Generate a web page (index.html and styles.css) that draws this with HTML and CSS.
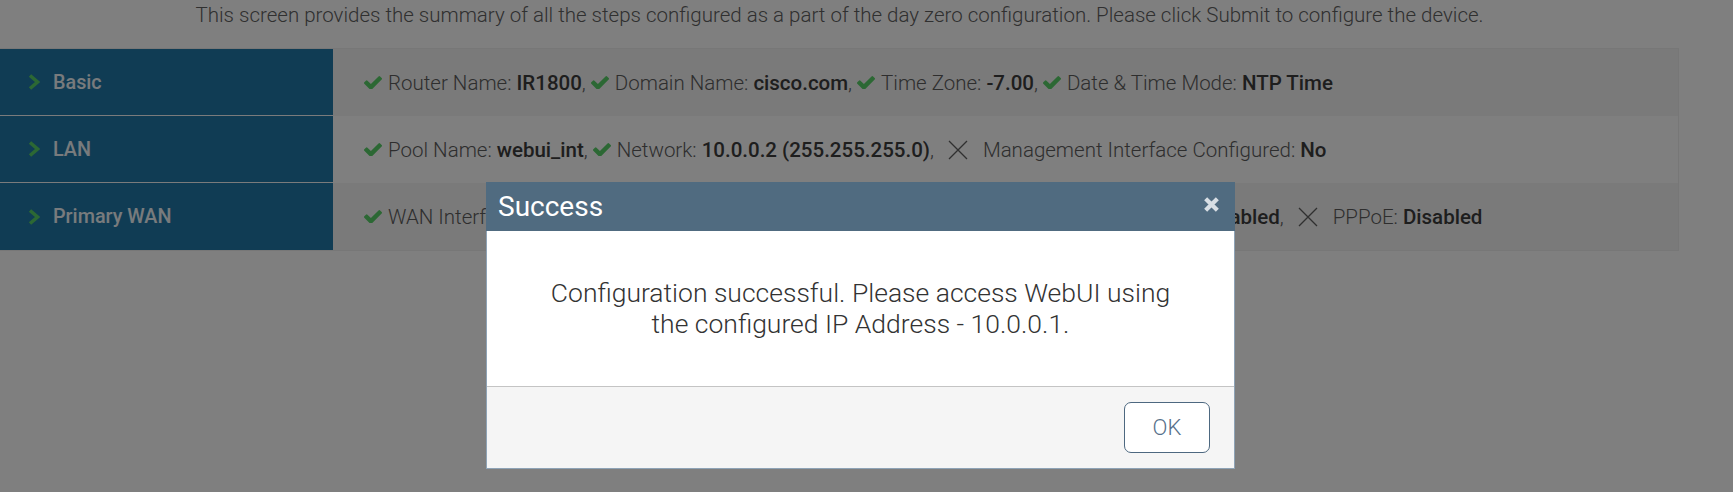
FILE: index.html
```html
<!DOCTYPE html>
<html lang="en">
<head>
  <meta charset="UTF-8" />
  <title>Day Zero Summary</title>
  <link rel="stylesheet" href="styles.css">
</head>
<body>

  <div class="page">
    <p class="intro">This screen provides the summary of all the steps configured as a part of the day zero configuration. Please click Submit to configure the device.</p>

    <div class="summary">
      <div class="row">
        <div class="row-head">
          <svg class="chevron" viewBox="0 0 12 16"><polyline points="2,1.5 9.5,8 2,14.5" /></svg>
          <span>Basic</span>
        </div>
        <div class="row-body">
          <svg class="ok" viewBox="121 338 1550 1090"><path d="M1671 566q0 40-28 68l-724 724-136 136q-28 28-68 28t-68-28l-136-136-362-362q-28-28-28-68t28-68l136-136q28-28 68-28t68 28l294 295 656-657q28-28 68-28t68 28l136 136q28 28 28 68z"/></svg>
          Router Name:&nbsp;<b>IR1800</b>,&nbsp;
          <svg class="ok" viewBox="121 338 1550 1090"><path d="M1671 566q0 40-28 68l-724 724-136 136q-28 28-68 28t-68-28l-136-136-362-362q-28-28-28-68t28-68l136-136q28-28 68-28t68 28l294 295 656-657q28-28 68-28t68 28l136 136q28 28 28 68z"/></svg>
          Domain Name:&nbsp;<b>cisco.com</b>,&nbsp;
          <svg class="ok" viewBox="121 338 1550 1090"><path d="M1671 566q0 40-28 68l-724 724-136 136q-28 28-68 28t-68-28l-136-136-362-362q-28-28-28-68t28-68l136-136q28-28 68-28t68 28l294 295 656-657q28-28 68-28t68 28l136 136q28 28 28 68z"/></svg>
          Time Zone:&nbsp;<b>-7.00</b>,&nbsp;
          <svg class="ok" viewBox="121 338 1550 1090"><path d="M1671 566q0 40-28 68l-724 724-136 136q-28 28-68 28t-68-28l-136-136-362-362q-28-28-28-68t28-68l136-136q28-28 68-28t68 28l294 295 656-657q28-28 68-28t68 28l136 136q28 28 28 68z"/></svg>
          Date &amp; Time Mode:&nbsp;<b>NTP Time</b>
        </div>
      </div>

      <div class="row">
        <div class="row-head">
          <svg class="chevron" viewBox="0 0 12 16"><polyline points="2,1.5 9.5,8 2,14.5" /></svg>
          <span>LAN</span>
        </div>
        <div class="row-body">
          <svg class="ok" viewBox="121 338 1550 1090"><path d="M1671 566q0 40-28 68l-724 724-136 136q-28 28-68 28t-68-28l-136-136-362-362q-28-28-28-68t28-68l136-136q28-28 68-28t68 28l294 295 656-657q28-28 68-28t68 28l136 136q28 28 28 68z"/></svg>
          Pool Name:&nbsp;<b>webui_int</b>,&nbsp;
          <svg class="ok" viewBox="121 338 1550 1090"><path d="M1671 566q0 40-28 68l-724 724-136 136q-28 28-68 28t-68-28l-136-136-362-362q-28-28-28-68t28-68l136-136q28-28 68-28t68 28l294 295 656-657q28-28 68-28t68 28l136 136q28 28 28 68z"/></svg>
          Network:&nbsp;<b>10.0.0.2 (255.255.255.0)</b>,&nbsp;
          <svg class="no" viewBox="0 0 20 20"><path d="M1 1L19 19M19 1L1 19"/></svg>
          Management Interface Configured:&nbsp;<b>No</b>
        </div>
      </div>

      <div class="row">
        <div class="row-head">
          <svg class="chevron" viewBox="0 0 12 16"><polyline points="2,1.5 9.5,8 2,14.5" /></svg>
          <span>Primary WAN</span>
        </div>
        <div class="row-body">
          <svg class="ok" viewBox="121 338 1550 1090"><path d="M1671 566q0 40-28 68l-724 724-136 136q-28 28-68 28t-68-28l-136-136-362-362q-28-28-28-68t28-68l136-136q28-28 68-28t68 28l294 295 656-657q28-28 68-28t68 28l136 136q28 28 28 68z"/></svg>
          WAN Interface:&nbsp;<b>GigabitEthernet0/0/0</b>,&nbsp;
          <svg class="ok" viewBox="121 338 1550 1090"><path d="M1671 566q0 40-28 68l-724 724-136 136q-28 28-68 28t-68-28l-136-136-362-362q-28-28-28-68t28-68l136-136q28-28 68-28t68 28l294 295 656-657q28-28 68-28t68 28l136 136q28 28 28 68z"/></svg>
          IP Address:&nbsp;<b>DHCP</b>,&nbsp;
          <svg class="ok" viewBox="121 338 1550 1090"><path d="M1671 566q0 40-28 68l-724 724-136 136q-28 28-68 28t-68-28l-136-136-362-362q-28-28-28-68t28-68l136-136q28-28 68-28t68 28l294 295 656-657q28-28 68-28t68 28l136 136q28 28 28 68z"/></svg>
          NAT:&nbsp;<b>Enabled</b>,&nbsp;
          <svg class="ok" viewBox="121 338 1550 1090"><path d="M1671 566q0 40-28 68l-724 724-136 136q-28 28-68 28t-68-28l-136-136-362-362q-28-28-28-68t28-68l136-136q28-28 68-28t68 28l294 295 656-657q28-28 68-28t68 28l136 136q28 28 28 68z"/></svg>
          DNS Proxy:&nbsp;<b>Enabled</b>,&nbsp;
          <svg class="no" viewBox="0 0 20 20"><path d="M1 1L19 19M19 1L1 19"/></svg>
          PPPoE:&nbsp;<b>Disabled</b>
        </div>
      </div>
    </div>
  </div>

  <div class="backdrop"></div>

  <div class="modal">
    <div class="modal-header">
      <span>Success</span>
      <svg class="close" viewBox="0 0 16 16"><path d="M2.5 2.5L13.5 13.5M13.5 2.5L2.5 13.5"/></svg>
    </div>
    <div class="modal-body">
      Configuration successful. Please access WebUI using<br>
      the configured IP Address - 10.0.0.1.
    </div>
    <div class="modal-footer">
      <button class="btn">OK</button>
    </div>
  </div>

</body>
</html>
```

FILE: styles.css
```css
body {
  margin: 0;
  font-family: Roboto, "Liberation Sans", sans-serif;
  background: #fff;
  color: #5c5c5c;
}
.page {
  width: 1679px;
  padding-top: 3px;
}
.intro {
  margin: 0 0 20px;
  text-align: center;
  font-size: 20.5px;
  line-height: 25px;
  font-weight: 300;
  color: #606060;
}
.summary {
  border: 1px solid #eee;
  border-left: none;
  background: #f5f5f5;
}
.row {
  display: flex;
  height: 67px;
}
.row:nth-child(odd) .row-body {
  background: #f4f4f4;
}
.row:nth-child(even) .row-body {
  background: #fefefe;
}
.row-head {
  width: 333px;
  flex: none;
  box-sizing: border-box;
  display: flex;
  align-items: center;
  gap: 13px;
  padding-left: 28px;
  background: #2078a8;
  border-bottom: 1px solid #f4f6f8;
  color: #f0f6fa;
  font-size: 19.8px;
  font-weight: 500;
}
.row:last-child .row-head {
  border-bottom: none;
}
.chevron {
  width: 12px;
  height: 16px;
  fill: none;
  stroke: #58d068;
  stroke-width: 3.5;
}
.row-body {
  flex: 1;
  display: flex;
  align-items: center;
  padding-left: 31px;
  font-size: 20.5px;
  font-weight: 300;
  white-space: nowrap;
  overflow: hidden;
}
.row-body b {
  font-weight: 500;
  color: #3c3c3c;
}
.ok {
  width: 18px;
  height: 13px;
  margin-right: 6px;
  fill: #58d068;
  flex: none;
}
.no {
  width: 20px;
  height: 20px;
  margin: 0 15px 0 9px;
  fill: none;
  stroke: #606060;
  stroke-width: 1.3;
  flex: none;
}
.backdrop {
  position: fixed;
  inset: 0;
  background: rgba(0, 0, 0, 0.5);
}
.modal {
  position: fixed;
  left: 486px;
  top: 182px;
  width: 749px;
  box-sizing: border-box;
  background: #fff;
  border: 1px solid #8ea3b6;
  border-top: none;
}
.modal-header {
  height: 49px;
  margin: 0 -1px;
  display: flex;
  align-items: center;
  justify-content: space-between;
  padding: 0 15px 0 12px;
  background: #506b80;
  color: #fff;
  font-size: 28px;
}
.close {
  width: 17px;
  height: 17px;
  margin-top: -4px;
  fill: none;
  stroke: #d8dee4;
  stroke-width: 4;
}
.modal-body {
  padding: 46px 20px 47px;
  text-align: center;
  font-size: 26.5px;
  line-height: 31px;
  font-weight: 300;
  color: #333;
  border-bottom: 1px solid #c4c4c4;
}
.modal-footer {
  display: flex;
  justify-content: flex-end;
  padding: 15px 24px 15px;
  background: #f5f5f5;
}
.btn {
  width: 86px;
  height: 51px;
  border: 1px solid #4d6880;
  border-radius: 7px;
  background: #fff;
  color: #56708a;
  font-family: Roboto, "Liberation Sans", sans-serif;
  font-size: 22px;
  font-weight: 300;
}
```
